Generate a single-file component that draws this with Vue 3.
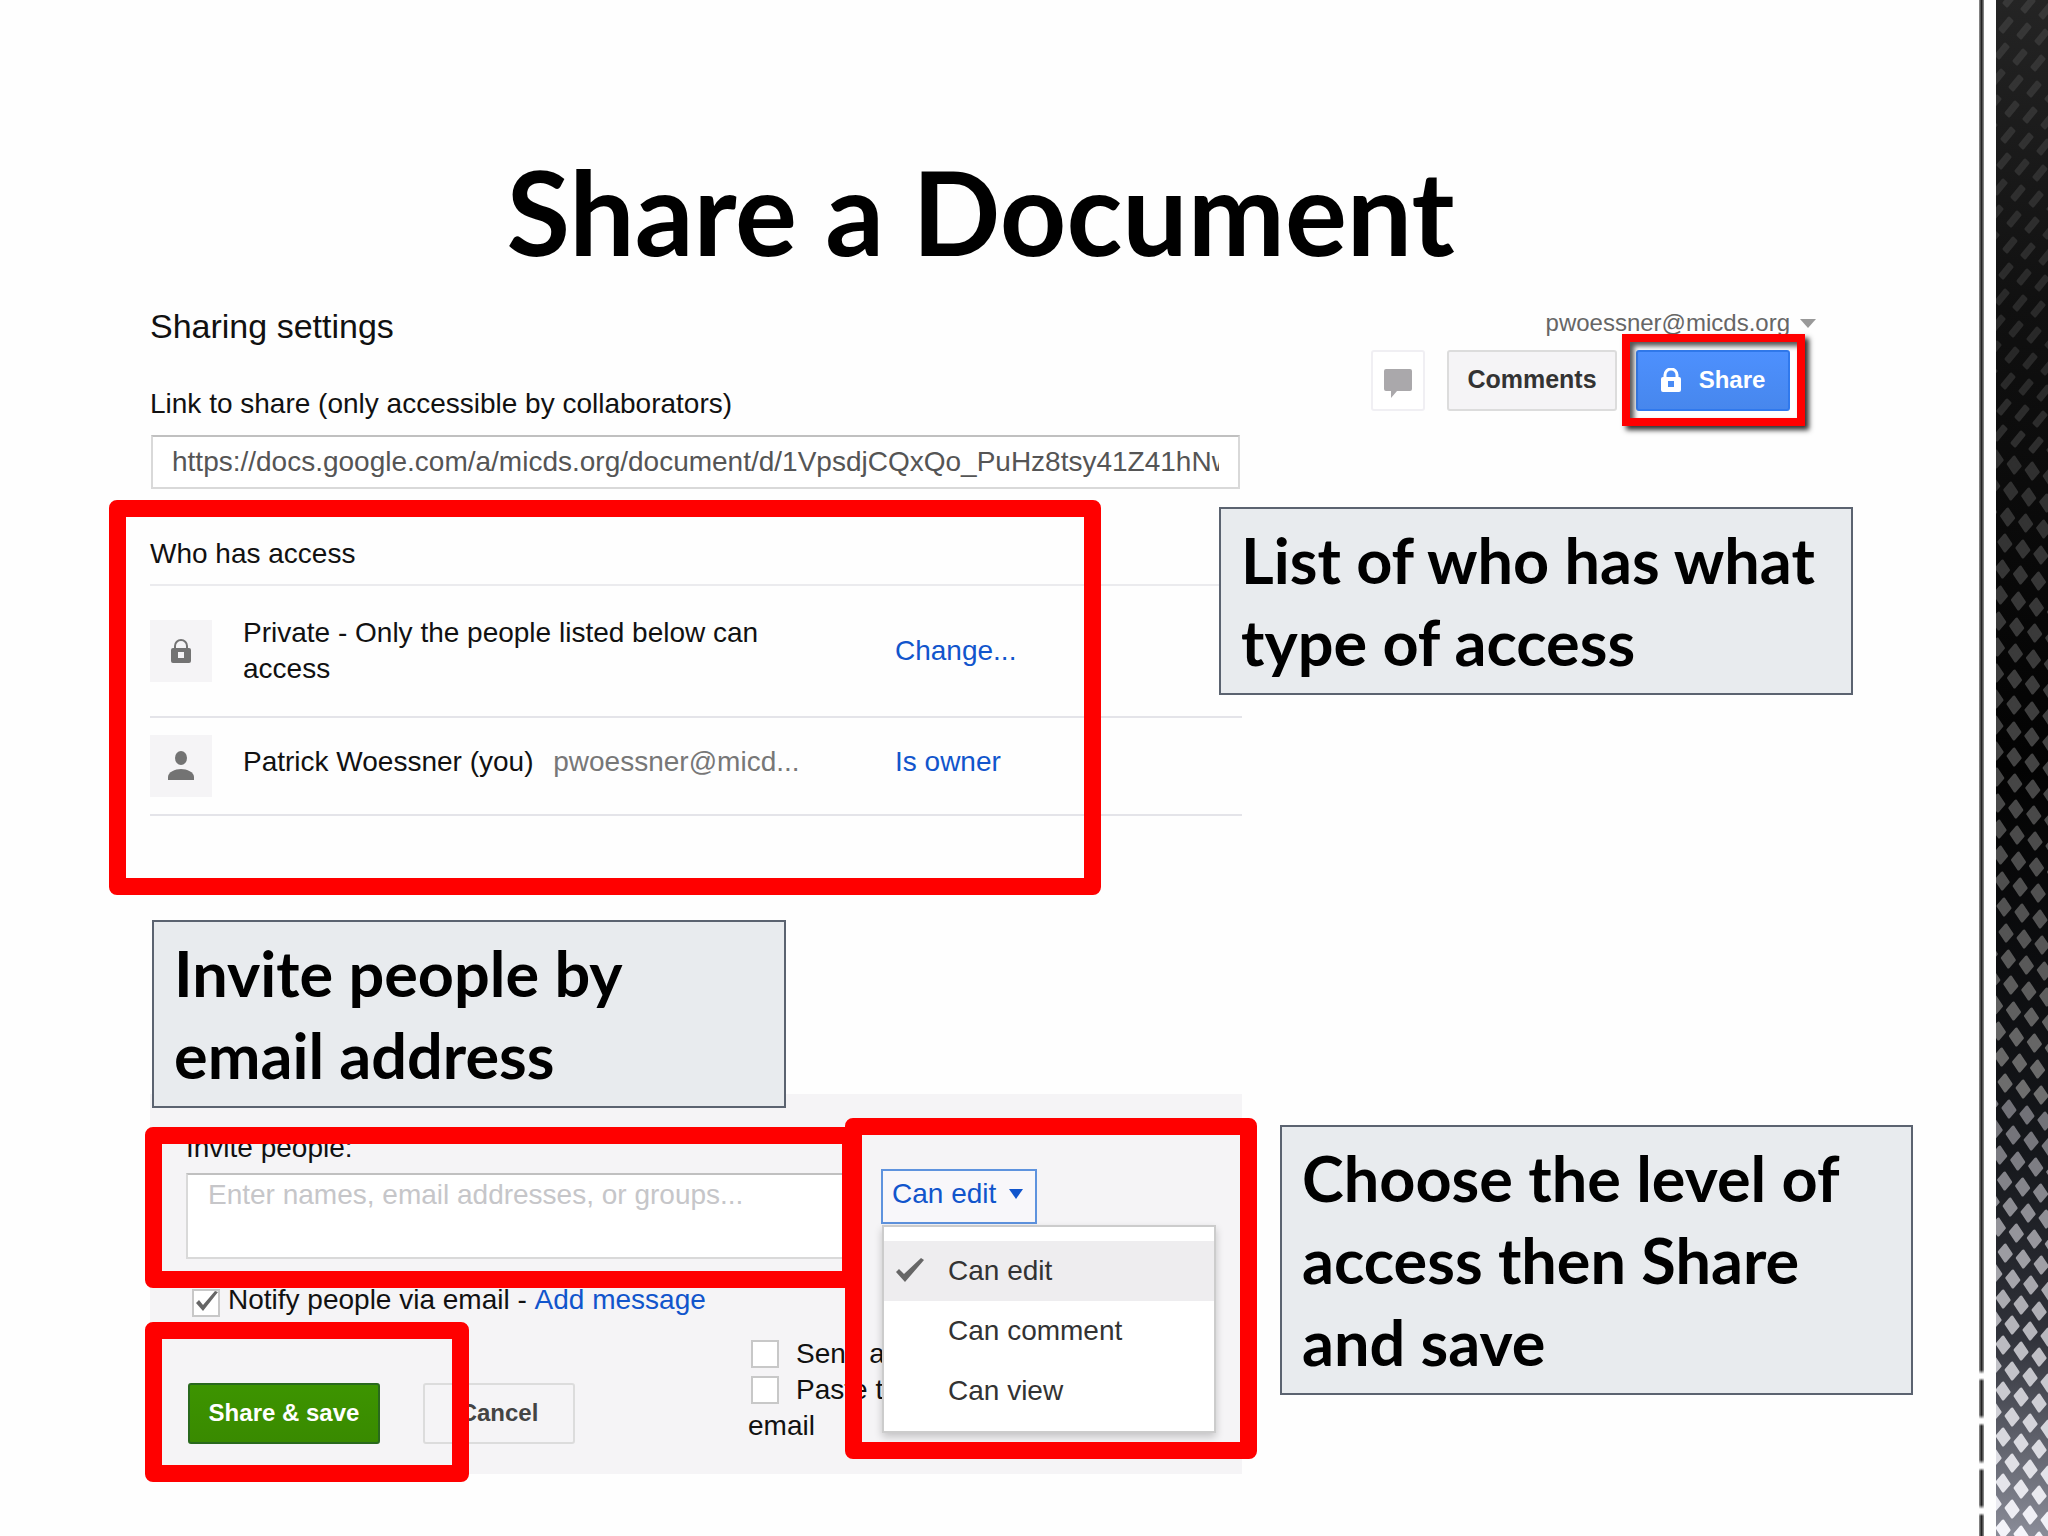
<template>
  <div class="slide">
    <main class="slide-main">
      <h1>Share a Document</h1>

      <div class="slide-columns">
        <section class="sharing">
          <h2>Sharing settings</h2>
          <label class="text-line link-label" for="share-link">Link to share (only accessible by collaborators)</label>
          <div class="link-box">
            <input id="share-link" type="text" readonly :value="shareLink">
          </div>

          <div class="access">
            <h3 class="text-line">Who has access</h3>
            <ul class="access-list">
              <li class="access-row">
                <span class="access-icon">
                  <svg width="20" height="24" viewBox="0 0 20 24">
                    <path d="M4 10V7a6 6 0 0 1 12 0v3" fill="none" stroke="#737373" stroke-width="2" />
                    <path fill-rule="evenodd" d="M2 9h16a2 2 0 0 1 2 2v11a2 2 0 0 1-2 2H2a2 2 0 0 1-2-2V11a2 2 0 0 1 2-2zM7 13v6h6v-6z" fill="#737373" />
                  </svg>
                </span>
                <span class="access-name">Private - Only the people listed below can access</span>
                <a href="#" class="access-link" @click.prevent>Change...</a>
              </li>
              <li class="access-row person">
                <span class="access-icon">
                  <svg width="26" height="30" viewBox="0 0 26 30">
                    <ellipse cx="13" cy="7" rx="6" ry="7" fill="#737373" />
                    <path d="M0 29v-3c0-5 7-8 13-8s13 3 13 8v3z" fill="#737373" />
                  </svg>
                </span>
                <span class="access-name">Patrick Woessner (you) <span class="access-email">pwoessner@micd...</span></span>
                <a href="#" class="access-link" @click.prevent>Is owner</a>
              </li>
            </ul>
            <div class="frame frame-access"></div>
          </div>

          <p class="callout callout-invite">Invite people by<br>email address</p>

          <form class="invite" @submit.prevent>
            <div class="invite-top">
              <div class="invite-field">
                <label class="text-line" for="invitees">Invite people:</label>
                <textarea id="invitees" v-model="invitees" placeholder="Enter names, email addresses, or groups..."></textarea>
                <div class="frame frame-invite"></div>
              </div>
              <div class="level">
                <button type="button" class="level-button" aria-haspopup="listbox" :aria-expanded="menuOpen" @click="menuOpen = !menuOpen">
                  {{ level }}
                  <svg width="14" height="10" viewBox="0 0 14 10"><path d="M0 0h14L7 10z" fill="#1155cc" /></svg>
                </button>
                <ul v-if="menuOpen" class="level-menu">
                  <li v-for="item in levels" :key="item">
                    <button type="button" :class="{ selected: item === level }" @click="level = item">
                      <svg v-if="item === level" class="menu-check" width="28" height="24" viewBox="0 0 28 24">
                        <path d="M0 14l3-3 5 5L25 0l3 2L9 24z" fill="#666" />
                      </svg>
                      {{ item }}
                    </button>
                  </li>
                </ul>
                <div class="frame frame-level"></div>
              </div>
            </div>

            <div class="notify text-line">
              <input id="notify" v-model="notify" class="tick" type="checkbox">
              <label for="notify">Notify people via email</label>&nbsp;-&nbsp;<a href="#" @click.prevent>Add message</a>
            </div>

            <div class="invite-bottom">
              <div class="actions">
                <button type="submit" class="btn btn-save">Share &amp; save</button>
                <button type="button" class="btn btn-cancel">Cancel</button>
                <div class="frame frame-save"></div>
              </div>
              <div class="options">
                <label><input v-model="sendCopy" class="tick" type="checkbox">Send a</label>
                <label><input v-model="pasteItem" class="tick" type="checkbox">Paste the email</label>
              </div>
            </div>
          </form>
        </section>

        <section class="side">
          <div class="toolbar">
            <button type="button" class="account">
              pwoessner@micds.org
              <svg width="16" height="9" viewBox="0 0 16 9"><path d="M0 0h16L8 9z" fill="#999" /></svg>
            </button>
            <div class="toolbar-buttons">
              <button type="button" class="btn btn-note" aria-label="Notifications">
                <svg width="28" height="29" viewBox="0 0 28 29">
                  <path d="M2 0h24a2 2 0 0 1 2 2v18a2 2 0 0 1-2 2H13l-6 7v-7H2a2 2 0 0 1-2-2V2a2 2 0 0 1 2-2z" fill="#aaa8ab" />
                </svg>
              </button>
              <button type="button" class="btn btn-comments">Comments</button>
              <div class="share">
                <button type="button" class="btn btn-share">
                  <svg width="20" height="24" viewBox="0 0 20 24">
                    <path d="M4 10V7a6 6 0 0 1 12 0v3" fill="none" stroke="#fff" stroke-width="3" />
                    <path fill-rule="evenodd" d="M2 9h16a2 2 0 0 1 2 2v11a2 2 0 0 1-2 2H2a2 2 0 0 1-2-2V11a2 2 0 0 1 2-2zM7 13v6h6v-6z" fill="#fff" />
                  </svg>
                  Share
                </button>
                <div class="frame frame-share"></div>
              </div>
            </div>
          </div>

          <p class="callout callout-access">List of who has what<br>type of access</p>
          <p class="callout callout-level">Choose the level of<br>access then Share<br>and save</p>
        </section>
      </div>
    </main>

    <aside class="edge">
      <div class="edge-line"></div>
      <svg class="edge-mesh" viewBox="0 0 52 1536" preserveAspectRatio="none">
        <defs>
          <linearGradient id="mesh-base" x1="0" y1="0" x2="0" y2="1">
            <stop offset="0" stop-color="#242424" />
            <stop offset="0.2" stop-color="#101010" />
            <stop offset="0.5" stop-color="#030303" />
            <stop offset="0.75" stop-color="#15171b" />
            <stop offset="0.87" stop-color="#30323a" />
            <stop offset="1" stop-color="#8a8c98" />
          </linearGradient>
        </defs>
        <rect width="52" height="1536" fill="url(#mesh-base)" />
        <path v-for="(hole, i) in holes" :key="i" :d="hole.d" :fill="hole.fill" :stroke="hole.fill" stroke-width="3" stroke-linejoin="round" />
      </svg>
    </aside>
  </div>
</template>

<script setup>
import { ref } from 'vue'

const shareLink = 'https://docs.google.com/a/micds.org/document/d/1VpsdjCQxQo_PuHz8tsy41Z41hNwQm7c'

// --- STATE ---
const levels = ['Can edit', 'Can comment', 'Can view']
const level = ref('Can edit')
const menuOpen = ref(true)
const invitees = ref('')
const notify = ref(true)
const sendCopy = ref(false)
const pasteItem = ref(false)

// --- METAL MESH ---
// [y, value] stops from the top of the strip to the bottom
const shades = [[0, 56], [350, 40], [700, 62], [950, 86], [1150, 120], [1250, 155], [1400, 205], [1536, 245]]
const drifts = [[0, -4], [400, -4], [550, -2], [750, 1], [1000, 3], [1150, 5], [1300, 9], [1536, 9]]

const valueAt = (stops, y) => {
  for (let i = 1; i < stops.length; i++) {
    const [y0, v0] = stops[i - 1]
    const [y1, v1] = stops[i]
    if (y <= y1) return v0 + (v1 - v0) * (Math.max(y, 0) - y0) / (y1 - y0)
  }
  return stops[stops.length - 1][1]
}

const holes = []
let x = 18
for (let y = -27; y < 1570; y += 26) {
  // each hole in a row sits 18 right and 6 down from the last one
  const first = Math.floor(-x / 18) - 1
  for (let col = first; col < first + 6; col++) {
    const cx = x + col * 18
    const cy = y + col * 6
    const s = Math.round(valueAt(shades, cy))
    const d = cy < 450
      ? `M${cx + 3} ${cy - 7}L${cx + 6} ${cy - 4}L${cx - 3} ${cy + 7}L${cx - 6} ${cy + 4}Z`
      : `M${cx} ${cy - 8}L${cx + 6} ${cy + 1}L${cx} ${cy + 8}L${cx - 6} ${cy - 1}Z`
    holes.push({ d, fill: `rgb(${s}, ${s}, ${s + (cy > 1100 ? 6 : 0)})` })
  }
  x += valueAt(drifts, y)
}
</script>

<style>
body {
  margin: 0;
  background: #fefefe;
}
</style>

<style scoped>
.slide {
  display: flex;
  min-height: 100vh;
  font-family: "Liberation Sans", Arial, sans-serif;
  font-size: 28px;
  line-height: 36px;
  color: #111;
  overflow: hidden;
}

.slide-main {
  flex: 1;
  min-width: 0;
  padding: 146px 66px 0 150px;
}

h1 {
  margin: 0;
  padding-right: 102px;
  text-align: center;
  font-family: Lato, Calibri, sans-serif;
  font-size: 116px;
  line-height: 132px;
  font-weight: 700;
  color: #000;
}

.slide-columns {
  display: grid;
  grid-template-columns: minmax(0, 1092fr) minmax(0, 671fr);
}

button,
input,
textarea {
  box-sizing: border-box;
  font-family: inherit;
}

button {
  cursor: pointer;
}

a {
  color: #1155cc;
  text-decoration: none;
}

ul {
  margin: 0;
  padding: 0;
  list-style: none;
}

/* --- Link --- */
h2 {
  margin: 28px 0 40px;
  font-size: 34px;
  line-height: 40px;
  font-weight: 400;
}

.text-line {
  display: block;
  margin: 0;
  font-size: 28px;
  line-height: 36px;
  font-weight: 400;
}

.link-box {
  box-sizing: border-box;
  height: 54px;
  margin: 13px 2px 0 1px;
  padding: 0 19px;
  border: 2px solid #d9d9d9;
  border-top-color: #c0c0c0;
  background: #fff;
}

.link-box input {
  display: block;
  width: 100%;
  height: 50px;
  padding: 0;
  border: none;
  outline: none;
  background: none;
  font-size: 28px;
  color: #555;
}

/* --- Who has access --- */
.access {
  position: relative;
  margin-top: 47px;
}

.access-list {
  margin-top: 12px;
  border-top: 2px solid #ebebee;
}

.access-row {
  display: flex;
  align-items: center;
  min-height: 130px;
  border-bottom: 2px solid #e4e4e9;
}

.access-row.person {
  min-height: 96px;
}

.access-row.person .access-name,
.access-row.person .access-link {
  padding-bottom: 8px;
}

.access-icon {
  display: flex;
  align-items: center;
  justify-content: center;
  width: 62px;
  height: 62px;
  margin-right: 31px;
  background: #f5f4f6;
}

.access-name {
  width: 560px;
  margin-right: 92px;
}

.access-email {
  margin-left: 12px;
  color: #777;
}

/* --- Callouts --- */
.callout {
  position: relative;
  box-sizing: border-box;
  max-width: 634px;
  margin: 0;
  padding: 10px 20px;
  border: 2px solid #5b6370;
  background: #e8ebee;
  font-family: Lato, Calibri, sans-serif;
  font-size: 63px;
  line-height: 82px;
  font-weight: 700;
  color: #000;
}

.callout-invite {
  z-index: 2;
  margin: 104px 0 -14px 2px;
}

.callout-access {
  margin: 96px 0 0 -23px;
}

.callout-level {
  margin: 430px 0 0 38px;
}

/* --- Red frames --- */
.frame {
  position: absolute;
  box-sizing: border-box;
  border: 17px solid #f00;
  border-radius: 8px;
  pointer-events: none;
}

.frame-access {
  top: -36px;
  right: 141px;
  bottom: -79px;
  left: -41px;
}

.frame-invite {
  top: -3px;
  right: 22px;
  bottom: -29px;
  left: -41px;
}

.frame-level {
  z-index: 4;
  top: -12px;
  right: -15px;
  left: -36px;
  height: 341px;
}

.frame-save {
  top: -61px;
  right: 106px;
  bottom: -38px;
  left: -43px;
}

.frame-share {
  top: -16px;
  right: -15px;
  bottom: -15px;
  left: -14px;
  border-width: 8px;
  border-radius: 0;
  box-shadow: 4px 4px 5px #333, inset 4px 4px 5px #555;
}

/* --- Invite --- */
.invite {
  padding: 36px 0 30px 36px;
  background: #f5f4f6;
}

.invite-top {
  display: flex;
}

.invite-field {
  position: relative;
  flex: 1;
  padding-right: 20px;
}

.invite-field textarea {
  display: block;
  width: 100%;
  height: 86px;
  margin-top: 7px;
  padding: 2px 20px;
  border: 2px solid #d9d9d9;
  border-top-color: #c0c0c0;
  resize: none;
  background: #fff;
  font-size: 28px;
  line-height: 36px;
}

.invite-field textarea::placeholder {
  color: #c6c6c9;
}

.level {
  position: relative;
  width: 361px;
  padding-top: 39px;
}

.level-button {
  display: flex;
  align-items: center;
  justify-content: space-between;
  width: 156px;
  height: 55px;
  padding: 0 12px 6px 9px;
  border: 2px solid #5e93de;
  background: #f8f7fa;
  font-size: 28px;
  color: #1155cc;
}

.level-menu {
  position: absolute;
  z-index: 3;
  top: 95px;
  left: 1px;
  box-sizing: border-box;
  width: 334px;
  padding: 14px 0 10px;
  border: 2px solid #ccc;
  background: #fff;
  box-shadow: 0 4px 8px rgba(0, 0, 0, 0.2);
}

.level-menu button {
  position: relative;
  display: block;
  width: 100%;
  height: 60px;
  padding: 0 0 0 64px;
  border: none;
  background: none;
  text-align: left;
  font-size: 28px;
  color: #333;
}

.level-menu button.selected {
  background: #eeedef;
}

.menu-check {
  position: absolute;
  top: 17px;
  left: 12px;
}

.tick {
  appearance: none;
  flex: none;
  width: 28px;
  height: 28px;
  margin: 0 17px 0 0;
  border: 2px solid #c8c8c8;
  background: #fff;
}

.notify {
  display: flex;
  align-items: center;
  margin-top: 23px;
}

.notify .tick {
  margin: 6px 8px 0 6px;
}

.notify .tick:checked {
  background: #fff url("data:image/svg+xml,%3Csvg xmlns='http://www.w3.org/2000/svg' viewBox='0 0 24 24'%3E%3Cpath d='M2 12l3-3 4 5L21 0l3 1L9 20z' fill='%23666'/%3E%3C/svg%3E") center / 24px no-repeat;
}

.invite-bottom {
  display: flex;
  margin-top: 18px;
}

.actions {
  position: relative;
  display: flex;
  align-self: flex-start;
  gap: 43px;
  margin: 47px 173px 0 2px;
}

.options {
  width: 180px;
}

.options label {
  display: block;
}

.options .tick {
  margin: 0 17px 0 3px;
  vertical-align: -5px;
}

/* --- Buttons --- */
.btn {
  display: flex;
  align-items: center;
  justify-content: center;
  height: 61px;
  padding: 0 18px 2px;
  border: 2px solid #dcdcdc;
  border-radius: 3px;
  background: #f5f4f6;
  font-size: 24px;
  font-weight: 700;
  color: #444;
}

.btn-save {
  width: 192px;
  border-color: #29691d;
  background: linear-gradient(#3d9400, #398a00);
  color: #fff;
}

.btn-cancel {
  width: 152px;
}

/* --- Toolbar --- */
.toolbar {
  display: flex;
  flex-direction: column;
  align-items: flex-end;
  padding: 30px 97px 0 0;
}

.account {
  display: flex;
  align-items: center;
  gap: 10px;
  padding: 0;
  border: none;
  background: none;
  font-size: 24px;
  line-height: 30px;
  color: #666;
}

.toolbar-buttons {
  display: flex;
  margin: 12px 26px 0 0;
}

.btn-note {
  width: 54px;
  margin-right: 22px;
  padding: 6px 0 0;
  border-color: #f0eff3;
  background: #fff;
}

.btn-comments {
  width: 170px;
  margin-right: 19px;
  padding: 0 0 2px;
  font-size: 25px;
  color: #333;
}

.share {
  position: relative;
}

.btn-share {
  gap: 18px;
  width: 154px;
  border-color: #3079ed;
  background: linear-gradient(#4d90fe, #4787ed);
  color: #fff;
}

/* --- Right edge --- */
.edge {
  display: flex;
  gap: 12px;
}

.edge-line {
  display: flex;
  align-items: flex-end;
  width: 5px;
  background: linear-gradient(90deg, #999, #222, #999);
}

/* the line breaks into dashes near the bottom */
.edge-line::after {
  content: "";
  width: 100%;
  height: 200px;
  background: repeating-linear-gradient(transparent 0 34px, #fefefe 38px 42px, transparent 45px);
}

.edge-mesh {
  display: block;
  width: 52px;
  height: 100%;
}
</style>
